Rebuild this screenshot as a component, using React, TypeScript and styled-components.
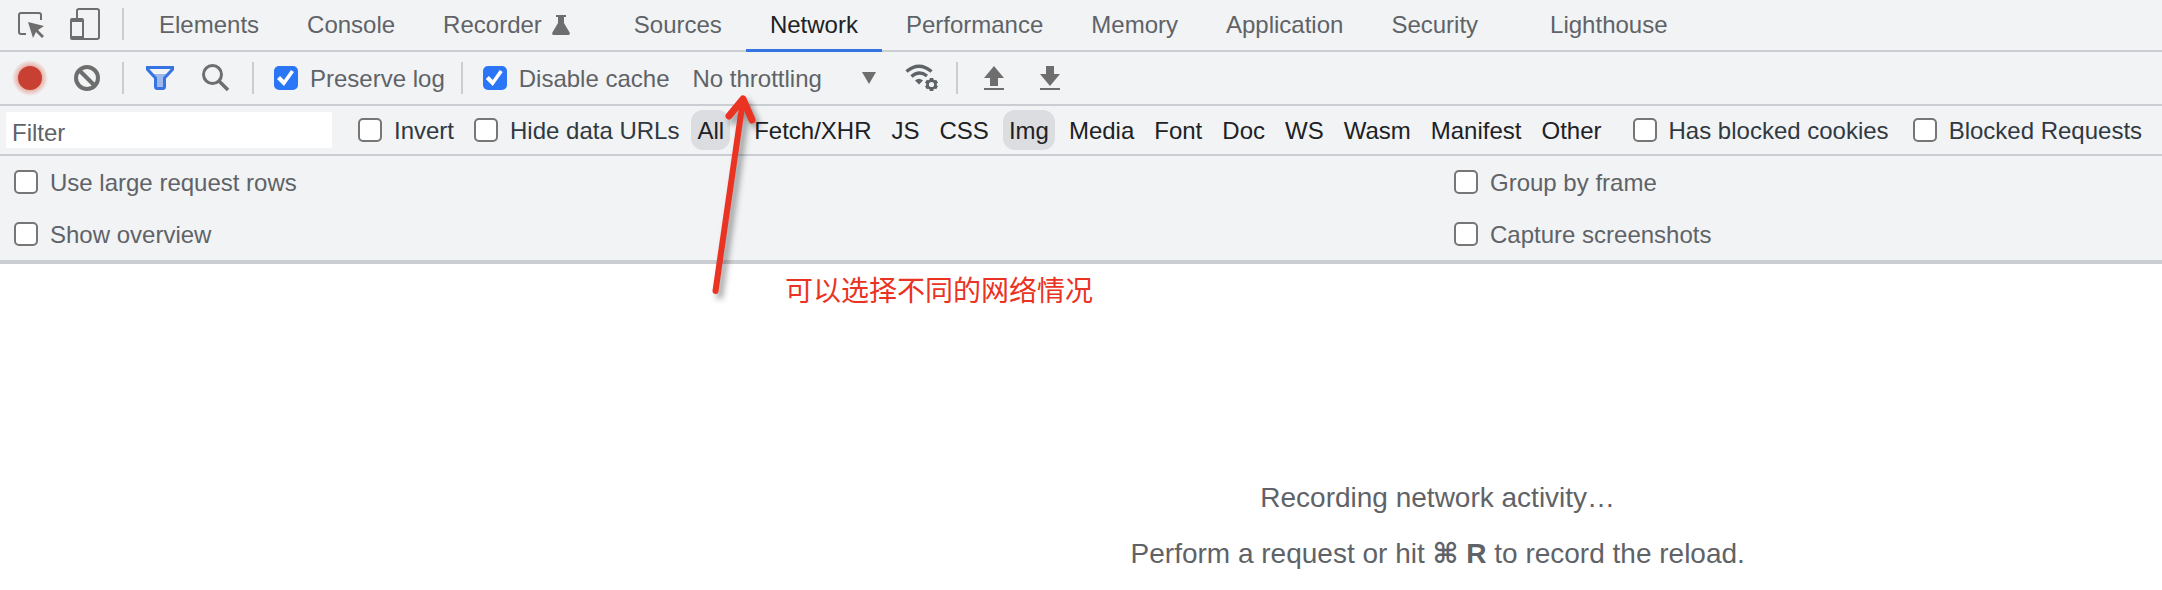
import React, { useState } from "react";
import styled, { createGlobalStyle } from "styled-components";

const color = {
  bar: "#f1f3f4",
  line: "#cacdd1",
  muted: "#5f6368",
  text: "#202124",
  filterLabel: "#303942",
  icon: "#6e6e6e",
  accent: "#3574e2",
  note: "#ea3323",
};

const GlobalStyle = createGlobalStyle`
  * { box-sizing: border-box; }
  body { margin: 0; background: #fff; }
  body, button, input, select {
    font-family: "Liberation Sans", Arial, "Noto Sans CJK SC", sans-serif;
    font-size: 24px;
    line-height: 28px;
  }
  button { cursor: pointer; }
`;

const Page = styled.div`
  position: relative;
  min-height: 100vh;
  display: flex;
  flex-direction: column;
  overflow: hidden;
`;

const Bar = styled.div<{ $height: number }>`
  display: flex;
  align-items: center;
  height: ${(p) => p.$height}px;
  background: ${color.bar};
  border-bottom: 2px solid ${color.line};
  white-space: nowrap;
`;

const TabBar = styled(Bar)`
  position: relative;
  align-items: flex-start;
  padding-left: 16px;
`;

const ToolBar = styled(Bar)`
  padding-left: 12px;
`;

const FilterBar = styled(Bar)`
  padding-left: 6px;
`;

const Divider = styled.span<{ $left: number; $right: number }>`
  flex: none;
  width: 2px;
  height: 32px;
  margin: 0 ${(p) => p.$right}px 0 ${(p) => p.$left}px;
  background: ${color.line};
`;

const IconButton = styled.button<{ $gap?: number }>`
  flex: none;
  display: flex;
  padding: 0;
  margin-right: ${(p) => p.$gap ?? 0}px;
  border: 0;
  background: none;
  color: ${color.icon};
`;

const TabTools = styled.div`
  display: flex;
  align-items: center;
  height: 48px;
`;

const TabList = styled.div`
  display: flex;
`;

const Tab = styled.button<{ $active: boolean; $trail?: number }>`
  display: flex;
  align-items: center;
  gap: 10px;
  height: 52px;
  padding: 0 ${(p) => 24 + (p.$trail ?? 0)}px 2px 24px;
  border: 0;
  background: none;
  color: ${(p) => (p.$active ? color.text : color.muted)};
  box-shadow: ${(p) => (p.$active ? `inset 0 -3px ${color.accent}` : "none")};
`;

const CheckLabel = styled.label<{ $gap?: number; $dark?: boolean }>`
  display: flex;
  align-items: center;
  gap: 12px;
  margin-right: ${(p) => p.$gap ?? 0}px;
  color: ${(p) => (p.$dark ? color.filterLabel : color.muted)};
  white-space: nowrap;
`;

const LabelText = styled.span`
  padding-top: 2px;
`;

const Box = styled.input`
  appearance: none;
  flex: none;
  width: 24px;
  height: 24px;
  margin: 0;
  border: 2px solid #767676;
  border-radius: 5px;
  background: #fff;

  &:checked {
    border-color: #2b76f6;
    background: #2b76f6;
  }

  &:checked::before {
    content: "";
    display: block;
    width: 20px;
    height: 20px;
    background: #fff;
    clip-path: polygon(1px 11px, 4px 8px, 8px 12px, 15px 2px, 18px 4px, 8px 18px);
  }
`;

const SelectWrap = styled.span`
  position: relative;
  flex: none;
  width: 184px;
  margin-right: 29px;
`;

const Select = styled.select`
  appearance: none;
  width: 100%;
  height: 32px;
  padding: 2px 0 0;
  border: 0;
  background: none;
  color: ${color.muted};
`;

const Caret = styled.svg`
  position: absolute;
  right: 0;
  top: 10px;
  pointer-events: none;
`;

const FilterInput = styled.input`
  flex: none;
  width: 326px;
  height: 36px;
  padding: 6px 6px 0;
  margin-right: 26px;
  border: 0;
  border-radius: 0;
  background: #fff;
  color: ${color.text};

  &::placeholder {
    color: ${color.muted};
    opacity: 1;
  }
`;

const Types = styled.div`
  display: flex;
  gap: 8px;
  margin-right: 25px;
`;

const TypeButton = styled.button<{ $on: boolean; $first: boolean }>`
  height: 40px;
  padding: 2px 6px 0;
  margin-right: ${(p) => (p.$first ? 10 : 0)}px;
  border: 0;
  border-radius: 12px;
  background: ${(p) => (p.$on ? "#dcdde1" : "transparent")};
  color: ${color.text};
`;

const Settings = styled.div`
  display: grid;
  grid-template-columns: 120fr 59fr;
  grid-auto-rows: 52px;
  padding-left: 14px;
  background: ${color.bar};
  border-bottom: 4px solid ${color.line};
`;

const Content = styled.main`
  position: relative;
  flex: 1;
  padding: 206px 0 16px 33%;
  color: ${color.muted};
  font-size: 28px;
  line-height: 56px;
  text-align: center;

  p { margin: 0; }
`;

const Shortcut = styled.b`
  font-family: "Liberation Sans", "DejaVu Sans", sans-serif;
`;

const Note = styled.div`
  position: absolute;
  left: 785px;
  top: 5px;
  color: ${color.note};
  font-family: "Noto Sans CJK SC", sans-serif;
  font-size: 28px;
  line-height: 40px;
  white-space: nowrap;
`;

const Arrow = styled.svg`
  position: absolute;
  left: 700px;
  top: 90px;
  pointer-events: none;
  filter: drop-shadow(4px 5px 3px rgba(0, 0, 0, 0.4));
`;

const InspectIcon = () => (
  <svg width="28" height="28" viewBox="0 0 28 28" fill="none">
    <path d="M10 24H5a2 2 0 0 1-2-2V5a2 2 0 0 1 2-2h18a2 2 0 0 1 2 2v5" stroke="currentColor" strokeWidth="2" />
    <path d="M12 12l16 4-6 4 6 6-2 2-6-6-3 6z" fill="currentColor" />
  </svg>
);

const DeviceIcon = () => (
  <svg width="30" height="32" viewBox="0 0 30 32" fill="none" stroke="currentColor">
    <path d="M7 10V3a2 2 0 0 1 2-2h18a2 2 0 0 1 2 2v26a2 2 0 0 1-2 2H12" strokeWidth="2" />
    <path d="M2 10h10a2 2 0 0 1 2 2v18a2 2 0 0 1-2 2H2a2 2 0 0 1-2-2V12a2 2 0 0 1 2-2zm0 4v14h10V14z" fill="currentColor" stroke="none" fillRule="evenodd" />
  </svg>
);

const FlaskIcon = () => (
  <svg width="18" height="20" viewBox="0 0 18 20" fill={color.icon}>
    <path d="M4 0h10v2h-2v6l5.600 9.500Q18.500 20 16 20H2Q-.5 20 .4 17.500L6 8V2H4z" />
  </svg>
);

const RecordIcon = () => (
  <svg width="36" height="36" viewBox="0 0 36 36">
    <defs>
      <radialGradient id="glow">
        <stop offset="66%" stopColor="#d84a38" stopOpacity="0.4" />
        <stop offset="100%" stopColor="#d84a38" stopOpacity="0" />
      </radialGradient>
    </defs>
    <circle cx="18" cy="18" r="18" fill="url(#glow)" />
    <circle cx="18" cy="18" r="12" fill="#c84031" />
  </svg>
);

const ClearIcon = () => (
  <svg width="26" height="26" viewBox="0 0 26 26" fill="none" stroke="currentColor" strokeWidth="4">
    <circle cx="13" cy="13" r="11" />
    <path d="M5 5l16 16" />
  </svg>
);

const FunnelIcon = () => (
  <svg width="28" height="24" viewBox="0 0 28 24">
    <path d="M5 8h18l-6 6v8h-6v-8z" fill="#9db9ec" />
    <path d="M1.500 1.500h25v1.800L18.500 12v8.500q0 2-2 2h-5q-2 0-2-2V12L1.500 3.300z" fill="none" stroke={color.accent} strokeWidth="3" />
  </svg>
);

const SearchIcon = () => (
  <svg width="28" height="28" viewBox="0 0 28 28" fill="none" stroke="currentColor">
    <circle cx="10.500" cy="10.500" r="9" strokeWidth="3" />
    <path d="M16.500 16.500l9.500 9.500" strokeWidth="3.600" />
  </svg>
);

const WifiGearIcon = () => (
  <svg width="34" height="28" viewBox="0 0 34 28" fill="none" stroke={color.muted}>
    <path d="M1.500 7.500Q14 -3 26.500 7.500" strokeWidth="3.400" />
    <path d="M6.500 12.500Q14 6 22 12" strokeWidth="3.400" />
    <path d="M10 16.500q4-3.400 8 0l-4 4z" fill={color.muted} stroke="none" />
    <circle cx="26.500" cy="20.500" r="4" strokeWidth="2.800" />
    <g strokeWidth="3.600">
      <path d="M26.500 14v2.500M26.500 24.500v2.500M20.900 17.200l2 1.200M30.100 22.600l2 1.200M20.900 23.800l2-1.200M30.100 18.400l2-1.200" />
    </g>
  </svg>
);

const UploadIcon = () => (
  <svg width="20" height="24" viewBox="0 0 20 24" fill="currentColor">
    <path d="M10 0l10 12h-6v8H6v-8H0zM0 22h20v2H0z" />
  </svg>
);

const DownloadIcon = () => (
  <svg width="20" height="24" viewBox="0 0 20 24" fill="currentColor">
    <path d="M6 0h8v8h6L10 20 0 8h6zM0 22h20v2H0z" />
  </svg>
);

const tabs: { name: string; icon?: boolean; trail?: number }[] = [
  { name: "Elements" },
  { name: "Console" },
  { name: "Recorder", icon: true, trail: 16 },
  { name: "Sources" },
  { name: "Network" },
  { name: "Performance" },
  { name: "Memory" },
  { name: "Application" },
  { name: "Security", trail: 24 },
  { name: "Lighthouse" },
];

const types = ["All", "Fetch/XHR", "JS", "CSS", "Img", "Media", "Font", "Doc", "WS", "Wasm", "Manifest", "Other"];

interface CheckProps {
  label: string;
  checked?: boolean;
  gap?: number;
  dark?: boolean;
}

const Check = ({ label, checked, gap, dark }: CheckProps) => (
  <CheckLabel $gap={gap} $dark={dark}>
    <Box type="checkbox" defaultChecked={checked} />
    <LabelText>{label}</LabelText>
  </CheckLabel>
);

export default function App() {
  const [active, setActive] = useState("Network");
  const [selected, setSelected] = useState(["All", "Img"]);

  const toggle = (name: string) =>
    setSelected((s) => (s.includes(name) ? s.filter((n) => n !== name) : [...s, name]));

  return (
    <Page>
      <GlobalStyle />
      <TabBar $height={52}>
        <TabTools>
          <IconButton aria-label="Inspect element" $gap={26}><InspectIcon /></IconButton>
          <IconButton aria-label="Toggle device toolbar"><DeviceIcon /></IconButton>
          <Divider $left={22} $right={11} />
        </TabTools>
        <TabList role="tablist">
          {tabs.map((t) => (
            <Tab
              key={t.name}
              role="tab"
              aria-selected={active === t.name}
              $active={active === t.name}
              $trail={t.trail}
              onClick={() => setActive(t.name)}
            >
              {t.name}
              {t.icon && <FlaskIcon />}
            </Tab>
          ))}
        </TabList>
      </TabBar>

      <ToolBar $height={54}>
        <IconButton aria-label="Record" $gap={26}><RecordIcon /></IconButton>
        <IconButton aria-label="Clear"><ClearIcon /></IconButton>
        <Divider $left={22} $right={22} />
        <IconButton aria-label="Filter" $gap={28}><FunnelIcon /></IconButton>
        <IconButton aria-label="Search"><SearchIcon /></IconButton>
        <Divider $left={22} $right={20} />
        <Check label="Preserve log" checked />
        <Divider $left={16} $right={20} />
        <Check label="Disable cache" checked gap={23} />
        <SelectWrap>
          <Select aria-label="Throttling" defaultValue="No throttling">
            <option>No throttling</option>
            <option>Fast 3G</option>
            <option>Slow 3G</option>
            <option>Offline</option>
          </Select>
          <Caret width="14" height="12" viewBox="0 0 14 12" fill={color.icon}>
            <path d="M0 0h14L7 12z" />
          </Caret>
        </SelectWrap>
        <IconButton aria-label="Network conditions"><WifiGearIcon /></IconButton>
        <Divider $left={17} $right={26} />
        <IconButton aria-label="Import HAR file" $gap={36}><UploadIcon /></IconButton>
        <IconButton aria-label="Export HAR file"><DownloadIcon /></IconButton>
      </ToolBar>

      <FilterBar $height={50}>
        <FilterInput type="text" placeholder="Filter" aria-label="Filter" />
        <Check label="Invert" dark gap={20} />
        <Check label="Hide data URLs" dark gap={12} />
        <Types>
          {types.map((name) => (
            <TypeButton
              key={name}
              $on={selected.includes(name)}
              $first={name === "All"}
              aria-pressed={selected.includes(name)}
              onClick={() => toggle(name)}
            >
              {name}
            </TypeButton>
          ))}
        </Types>
        <Check label="Has blocked cookies" dark gap={24} />
        <Check label="Blocked Requests" dark />
      </FilterBar>

      <Settings>
        <Check label="Use large request rows" />
        <Check label="Group by frame" />
        <Check label="Show overview" />
        <Check label="Capture screenshots" />
      </Settings>

      <Content>
        <Note>可以选择不同的网络情况</Note>
        <p>Recording network activity…</p>
        <p>Perform a request or hit <Shortcut>⌘ R</Shortcut> to record the reload.</p>
      </Content>

      <Arrow width="70" height="215" viewBox="0 0 70 215" fill="none" stroke={color.note} strokeLinecap="round" strokeLinejoin="round">
        <path d="M43 10L15.500 201" strokeWidth="6" />
        <path d="M29 26L43 9l9 21" strokeWidth="7" />
      </Arrow>
    </Page>
  );
}
